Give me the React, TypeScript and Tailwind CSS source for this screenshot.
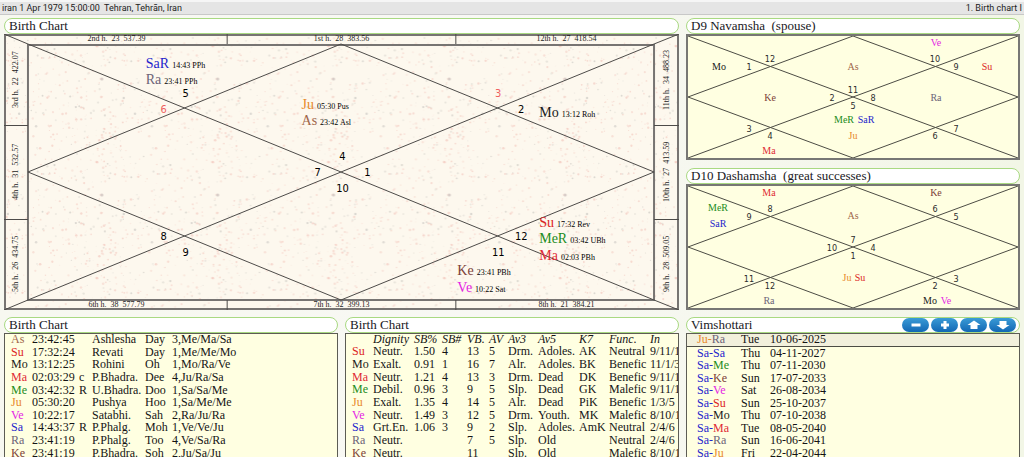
import React from "react";

const colors: Record<string, string> = {
  As: "text-[#a0674b]",
  Su: "text-[#dc1e1e]",
  Mo: "text-[#1a1a1a]",
  Ma: "text-[#e02a34]",
  Me: "text-[#1c8c1c]",
  Ju: "text-[#e8892a]",
  Ve: "text-[#e41ee4]",
  Sa: "text-[#2424cc]",
  Ra: "text-[#6c6478]",
  Ke: "text-[#7c4038]",
};

const planetColor = (name: string) => colors[name.slice(0, 2)];

type Mark = { x: number; y: number; text: string; red?: boolean };
type Planet = { x: number; y: number; name: string; info?: string };

const mainNumbers: Mark[] = [
  { x: 182, y: 59, text: "5" },
  { x: 160, y: 75, text: "6", red: true },
  { x: 495, y: 59, text: "3", red: true },
  { x: 518, y: 75, text: "2" },
  { x: 339, y: 122, text: "4" },
  { x: 314, y: 138, text: "7" },
  { x: 364, y: 138, text: "1" },
  { x: 339, y: 154, text: "10" },
  { x: 160, y: 202, text: "8" },
  { x: 182, y: 218, text: "9" },
  { x: 518, y: 202, text: "12" },
  { x: 495, y: 218, text: "11" },
];

const mainPlanets: Planet[] = [
  { x: 142, y: 30, name: "SaR", info: "14:43 PPh" },
  { x: 142, y: 46, name: "Ra", info: "23:41 PPh" },
  { x: 298, y: 71, name: "Ju", info: "05:30 Pus" },
  { x: 298, y: 87, name: "As", info: "23:42 Asl" },
  { x: 536, y: 79, name: "Mo", info: "13:12 Roh" },
  { x: 536, y: 189, name: "Su", info: "17:32 Rev" },
  { x: 536, y: 205, name: "MeR", info: "03:42 UBh" },
  { x: 536, y: 222, name: "Ma", info: "02:03 PBh" },
  { x: 454, y: 237, name: "Ke", info: "23:41 PBh" },
  { x: 454, y: 254, name: "Ve", info: "10:22 Sat" },
];

// house numbers keep the same slots in every small chart
const slots = [
  [84, 25], [63, 33], [249, 25], [270, 33], [167, 56], [146, 64],
  [187, 64], [167, 72], [63, 95], [84, 102], [249, 102], [270, 95],
];

const navamsha = {
  numbers: ["12", "1", "10", "9", "11", "2", "8", "5", "3", "4", "6", "7"],
  planets: [
    { x: 250, y: 9, name: "Ve" },
    { x: 33, y: 33, name: "Mo" },
    { x: 167, y: 33, name: "As" },
    { x: 301, y: 33, name: "Su" },
    { x: 84, y: 64, name: "Ke" },
    { x: 250, y: 64, name: "Ra" },
    { x: 158, y: 86, name: "MeR" },
    { x: 180, y: 86, name: "SaR" },
    { x: 167, y: 102, name: "Ju" },
    { x: 83, y: 117, name: "Ma" },
  ],
};

const dashamsha = {
  numbers: ["8", "9", "6", "5", "7", "10", "4", "1", "11", "12", "2", "3"],
  planets: [
    { x: 83, y: 9, name: "Ma" },
    { x: 250, y: 9, name: "Ke" },
    { x: 32, y: 24, name: "MeR" },
    { x: 32, y: 40, name: "SaR" },
    { x: 167, y: 32, name: "As" },
    { x: 161, y: 94, name: "Ju" },
    { x: 174, y: 94, name: "Su" },
    { x: 83, y: 117, name: "Ra" },
    { x: 244, y: 117, name: "Mo" },
    { x: 260, y: 117, name: "Ve" },
  ],
};

const positions = [
  ["As", "23:42:45", "", "Ashlesha", "Day", "3,Me/Ma/Sa"],
  ["Su", "17:32:24", "", "Revati", "Day", "1,Me/Me/Mo"],
  ["Mo", "13:12:25", "", "Rohini", "Oh", "1,Mo/Ra/Ve"],
  ["Ma", "02:03:29", "c", "P.Bhadra.", "Dee", "4,Ju/Ra/Sa"],
  ["Me", "03:42:32", "R", "U.Bhadra.", "Doo", "1,Sa/Sa/Me"],
  ["Ju", "05:30:20", "", "Pushya", "Hoo", "1,Sa/Me/Me"],
  ["Ve", "10:22:17", "", "Satabhi.", "Sah", "2,Ra/Ju/Ra"],
  ["Sa", "14:43:37", "R", "P.Phalg.", "Moh", "1,Ve/Ve/Ju"],
  ["Ra", "23:41:19", "", "P.Phalg.", "Too", "4,Ve/Sa/Ra"],
  ["Ke", "23:41:19", "", "P.Bhadra.", "Soh", "2,Ju/Sa/Ju"],
];

const strengthHead = ["", "Dignity", "SB%", "SB#", "VB.", "AV", "Av3", "Av5", "K7", "Func.", "In"];
const strengths = [
  ["Su", "Neutr.", "1.50", "4", "13", "5", "Drm.", "Adoles.", "AK", "Neutral", "9/11/1"],
  ["Mo", "Exalt.", "0.91", "1", "16", "7", "Alr.", "Adoles.", "BK", "Benefic", "11/1/3"],
  ["Ma", "Neutr.", "1.21", "4", "13", "3", "Drm.", "Dead", "DK", "Benefic", "9/11/1"],
  ["Me", "Debil.", "0.96", "3", "9", "5", "Slp.", "Dead", "GK", "Malefic", "9/11/1"],
  ["Ju", "Exalt.", "1.35", "4", "14", "5", "Alr.", "Dead", "PiK", "Benefic", "1/3/5"],
  ["Ve", "Neutr.", "1.49", "3", "12", "5", "Drm.", "Youth.", "MK", "Malefic", "8/10/1"],
  ["Sa", "Grt.En.", "1.06", "3", "9", "2", "Slp.", "Adoles.", "AmK", "Neutral", "2/4/6"],
  ["Ra", "Neutr.", "", "", "7", "5", "Slp.", "Old", "", "Neutral", "2/4/6"],
  ["Ke", "Neutr.", "", "", "11", "", "Slp.", "Old", "", "Malefic", "8/10/1"],
];

const periods = [
  ["Ju", "Ra", "Tue", "10-06-2025"],
  ["Sa", "Sa", "Thu", "04-11-2027"],
  ["Sa", "Me", "Thu", "07-11-2030"],
  ["Sa", "Ke", "Sun", "17-07-2033"],
  ["Sa", "Ve", "Sat", "26-08-2034"],
  ["Sa", "Su", "Sun", "25-10-2037"],
  ["Sa", "Mo", "Thu", "07-10-2038"],
  ["Sa", "Ma", "Tue", "08-05-2040"],
  ["Sa", "Ra", "Sun", "16-06-2041"],
  ["Sa", "Ju", "Fri", "22-04-2044"],
];

// Speckles of the paper tile behind the big chart
const speckles = (() => {
  let seed = 7;
  const next = () => (seed = (seed * 16807) % 2147483647) / 2147483647;
  return Array.from({ length: 300 }, () => ({
    x: next() * 116,
    y: next() * 116,
    r: 0.4 + next() * 0.9,
    fill: next() > 0.3 ? "#f3c8be" : "#cbc8c2",
    opacity: 0.25 + next() * 0.45,
  }));
})();

const place = (x: number, y: number, w: number, h: number) => ({
  left: `${(x / w) * 100}%`,
  top: `${(y / h) * 100}%`,
});

const TitleBar = ({ title, children }: { title: string; children?: React.ReactNode }) => (
  <div className="flex h-4 shrink-0 items-center justify-between rounded-full border border-[#a9d982] bg-white pl-1 pr-[3px]">
    <h2 className="whitespace-pre text-[13px] leading-4 text-[#181824]">{title}</h2>
    {children}
  </div>
);

const sideStrip =
  "z-10 row-span-3 row-start-1 grid rotate-180 grid-cols-3 whitespace-pre text-center leading-6 [writing-mode:vertical-rl]";

const MainChart = () => (
  <div className="relative grid flex-1 grid-cols-[24px_1fr_24px] grid-rows-[10px_1fr_10px] text-[8px] leading-[10px] text-[#1c1c1c]">
    <svg
      className="absolute inset-0 h-full w-full"
      viewBox="0 0 676 276"
      preserveAspectRatio="none"
      fill="none"
      stroke="#4c4a48"
    >
      <defs>
        <pattern id="paper" width="116" height="116" patternUnits="userSpaceOnUse">
          <rect width="116" height="116" fill="#fdf8ee" stroke="none" />
          {speckles.map((s, i) => (
            <circle key={i} cx={s.x} cy={s.y} r={s.r} fill={s.fill} opacity={s.opacity} stroke="none" />
          ))}
          <circle cx="98" cy="45" r="1.6" fill="#d8cdc8" stroke="none" />
        </pattern>
      </defs>
      <rect width="676" height="276" fill="url(#paper)" stroke="none" />
      <rect x="1" y="1" width="674" height="274" stroke="#777472" strokeWidth="2" />
      <rect x="24" y="11" width="627" height="255" stroke="#777472" strokeWidth="2" />
      <path d="M0 0L24 10M676 0L651 10M0 276L24 266M676 276L651 266" />
      <path d="M223.5 0V10M452.5 0V10M223.5 266V276M452.5 266V276M0 91.5H24M0 185.5H24M651 91.5H676M651 185.5H676" />
      <path d="M24 10L651 266M651 10L24 266M337.5 10L24 138L337.5 266L651 138Z" />
    </svg>
    <div className="z-10 col-span-3 col-start-1 row-start-1 grid grid-cols-3 whitespace-pre text-center">
      <span>2nd h.  23  537.39</span>
      <span>1st h.  28  383.56</span>
      <span>12th h.  27  418.54</span>
    </div>
    <div className={`${sideStrip} col-start-1`}>
      <span>5th h.  26  434.75</span>
      <span>4th h.  31  532.57</span>
      <span>3rd h.  22  422.07</span>
    </div>
    <div className={`${sideStrip} col-start-3`}>
      <span>9th h.  28  509.05</span>
      <span>10th h.  27  413.59</span>
      <span>11th h.  34  488.23</span>
    </div>
    <div className="z-10 col-span-3 col-start-1 row-start-3 grid grid-cols-3 whitespace-pre text-center">
      <span>6th h.  38  577.79</span>
      <span>7th h.  32  399.13</span>
      <span>8th h.  21  384.21</span>
    </div>
    {mainNumbers.map((n) => (
      <span
        key={n.text}
        className={`absolute -translate-x-1/2 -translate-y-1/2 font-['DejaVu_Sans_Condensed','Noto_Sans',sans-serif] text-[11px] leading-none ${n.red ? "text-[#f06060]" : "text-black"}`}
        style={place(n.x, n.y, 676, 276)}
      >
        {n.text}
      </span>
    ))}
    {mainPlanets.map((p) => (
      <span
        key={p.name}
        className="absolute flex -translate-y-1/2 items-baseline gap-[3px] whitespace-nowrap leading-none"
        style={place(p.x, p.y, 676, 276)}
      >
        <span className={`text-sm leading-none ${planetColor(p.name)}`}>{p.name}</span>
        <span className="text-[8px] text-black">{p.info}</span>
      </span>
    ))}
  </div>
);

const SmallChart = ({ numbers, planets }: { numbers: string[]; planets: Planet[] }) => (
  <div className="relative h-[126px] shrink-0 border-2 border-[#777774] bg-[#ffffe1]">
    <svg
      className="absolute inset-0 h-full w-full"
      viewBox="0 0 330 122"
      preserveAspectRatio="none"
      fill="none"
      stroke="#4c4c44"
    >
      <path d="M0 0L330 122M330 0L0 122M165 0L0 61L165 122L330 61Z" />
    </svg>
    {numbers.map((n, i) => (
      <span
        key={n}
        className="absolute -translate-x-1/2 -translate-y-1/2 font-['DejaVu_Sans_Condensed','Noto_Sans',sans-serif] text-[9px] leading-none text-[#2c2c2c]"
        style={place(slots[i][0] - 2, slots[i][1] - 2, 330, 122)}
      >
        {n}
      </span>
    ))}
    {planets.map((p) => (
      <span
        key={p.name}
        className={`absolute -translate-x-1/2 -translate-y-1/2 text-[10px] leading-none ${planetColor(p.name)}`}
        style={place(p.x - 2, p.y - 2, 330, 122)}
      >
        {p.name}
      </span>
    ))}
  </div>
);

const panel = "min-h-0 flex-1 overflow-hidden border border-b-0 border-[#5c5c54] bg-[#ffffe1]";
const table = "-mt-px h-[126px] table-fixed border-collapse whitespace-nowrap text-left text-xs leading-3 text-[#141414]";

const PositionsTable = () => (
  <div className={panel}>
    <table className={`${table} ml-[6px] w-[320px]`}>
      <colgroup>
        <col className="w-[21px]" />
        <col className="w-[47px]" />
        <col className="w-[13px]" />
        <col className="w-[53px]" />
        <col className="w-[27px]" />
        <col />
      </colgroup>
      <tbody>
        {positions.map((row) => (
          <tr key={row[0]}>
            {row.map((cell, i) => (
              <td key={i} className={i === 0 ? planetColor(cell) : ""}>{cell}</td>
            ))}
          </tr>
        ))}
      </tbody>
    </table>
  </div>
);

const StrengthTable = () => (
  <div className={panel}>
    <table className={`${table} ml-[6px] w-[336px]`}>
      <colgroup>
        <col className="w-[21px]" />
        <col className="w-[41px]" />
        <col className="w-[28px]" />
        <col className="w-[25px]" />
        <col className="w-[22px]" />
        <col className="w-[19px]" />
        <col className="w-[30px]" />
        <col className="w-[41px]" />
        <col className="w-[30px]" />
        <col className="w-[41px]" />
        <col />
      </colgroup>
      <thead>
        <tr>
          {strengthHead.map((h) => (
            <th key={h} className="font-normal italic">{h}</th>
          ))}
        </tr>
      </thead>
      <tbody>
        {strengths.map((row) => (
          <tr key={row[0]}>
            {row.map((cell, i) => (
              <td key={i} className={i === 0 ? planetColor(cell) : ""}>{cell}</td>
            ))}
          </tr>
        ))}
      </tbody>
    </table>
  </div>
);

const PeriodsTable = () => (
  <div className={panel}>
    <table className={`${table} w-full`}>
      <colgroup>
        <col className="w-[54px]" />
        <col className="w-[29px]" />
        <col />
      </colgroup>
      <tbody>
        {periods.map(([major, minor, day, date], i) => (
          <tr key={date} className={i === 0 ? "border-b border-[#4c4c44] bg-[#f2f0dc]" : ""}>
            <td className="pl-[10px]">
              <span className={planetColor(major)}>{major}-</span>
              <span className={planetColor(minor)}>{minor}</span>
            </td>
            <td>{day}</td>
            <td>{date}</td>
          </tr>
        ))}
      </tbody>
    </table>
  </div>
);

const tools = [
  { label: "Collapse", path: "M4.5 5.5H13.500V8.500H4.5Z" },
  { label: "Expand", path: "M7.5 3H10.5V5.5H13V8.5H10.5V11H7.5V8.5H5V5.5H7.5Z" },
  { label: "Move up", path: "M9 2.5L15.5 7H12.5V11H5.5V7H2.5Z" },
  { label: "Move down", path: "M9 11.5L15.5 7H12.5V3H5.5V7H2.5Z" },
];

const App = () => {
  return (
    <main className="flex h-screen flex-col overflow-hidden bg-linear-to-r from-[#f7f8f0] via-[#f8f8f4] to-[#f2f6e6] font-['Liberation_Serif',serif]">
      {/* Status bar */}
      <header className="flex h-[15px] shrink-0 items-center justify-between whitespace-pre border-t-2 border-b border-t-[#f6f6f6] border-b-[#c8c8c8] bg-[#e5e5e5] px-0.5 font-[Roboto,sans-serif] text-[9px] leading-3 text-[#222222]">
        <span>iran 1 Apr 1979 15:00:00  Tehran, Tehrān, Iran</span>
        <span>1. Birth chart I</span>
      </header>

      <div className="grid min-h-0 flex-1 grid-cols-3 grid-rows-[auto_1fr] gap-x-[7px] gap-y-[7px] px-1 pt-[3px]">
        <section className="col-span-2 flex flex-col">
          <TitleBar title="Birth Chart" />
          <MainChart />
        </section>

        {/* Divisional charts */}
        <div className="flex flex-col gap-2">
          <section>
            <TitleBar title="D9 Navamsha  (spouse)" />
            <SmallChart {...navamsha} />
          </section>
          <section>
            <TitleBar title="D10 Dashamsha  (great successes)" />
            <SmallChart {...dashamsha} />
          </section>
        </div>

        <section className="flex min-h-0 min-w-0 flex-col">
          <TitleBar title="Birth Chart" />
          <PositionsTable />
        </section>
        <section className="flex min-h-0 min-w-0 flex-col">
          <TitleBar title="Birth Chart" />
          <StrengthTable />
        </section>
        <section className="flex min-h-0 min-w-0 flex-col">
          <TitleBar title="Vimshottari">
            <div className="flex gap-0.5">
              {tools.map((t) => (
                <button
                  key={t.label}
                  type="button"
                  aria-label={t.label}
                  className="flex h-[14px] w-[27px] cursor-pointer items-center justify-center rounded-full bg-linear-to-b from-[#3a9bd6] to-[#1268b4]"
                >
                  <svg width="18" height="14" viewBox="0 0 18 14" fill="#ffffff">
                    <path d={t.path} />
                  </svg>
                </button>
              ))}
            </div>
          </TitleBar>
          <PeriodsTable />
        </section>
      </div>
    </main>
  );
};

export default App;
